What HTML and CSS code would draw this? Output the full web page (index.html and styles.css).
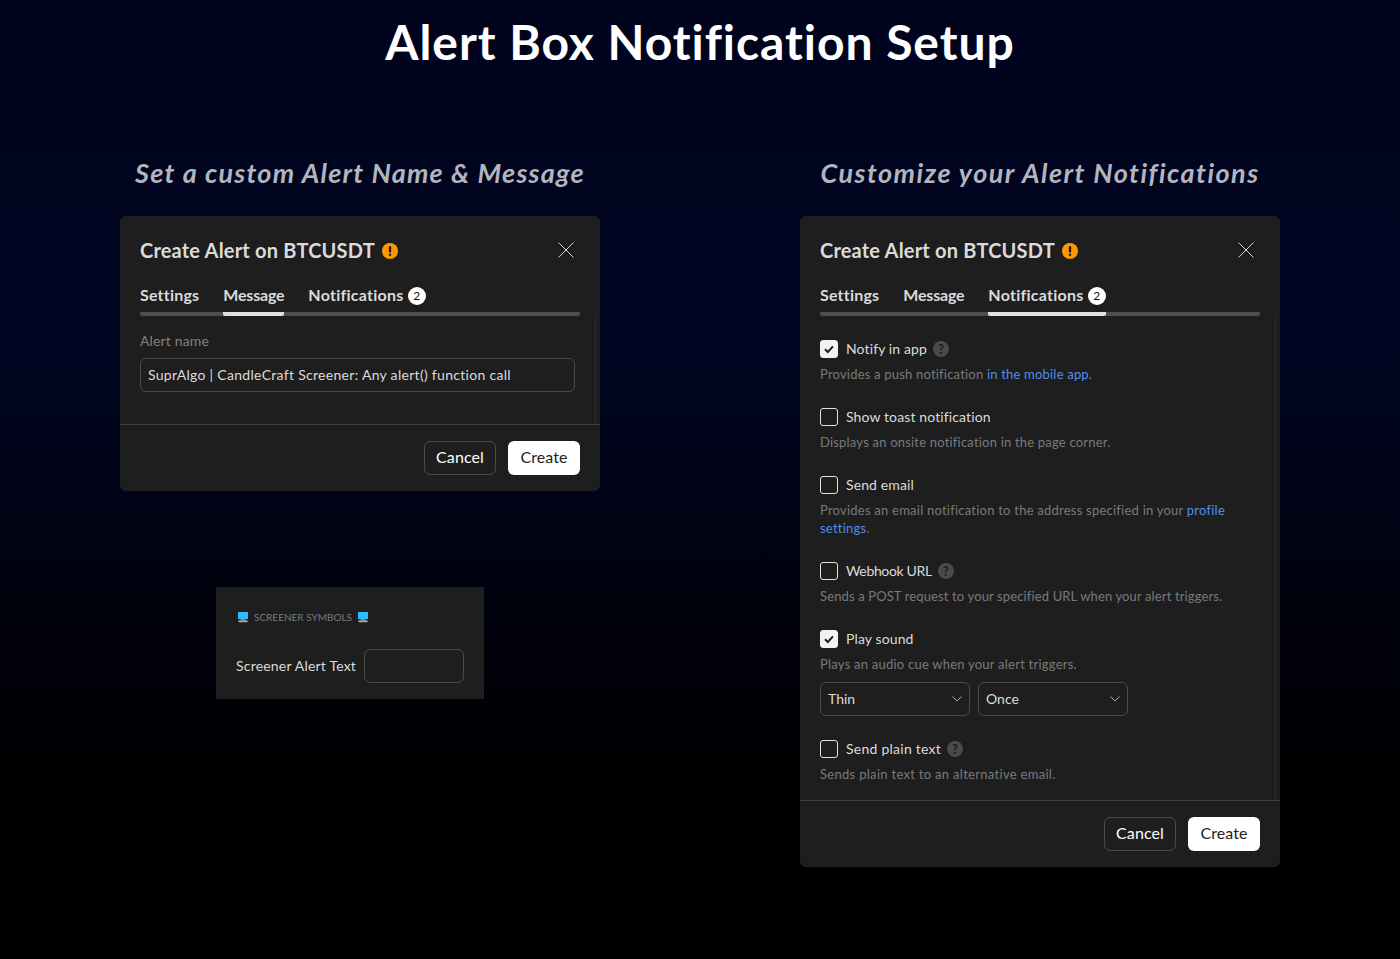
FILE: index.html
```html
<!DOCTYPE html>
<html lang="en">
<head>
<meta charset="utf-8">
<title>Alert Box Notification Setup</title>
<link rel="stylesheet" href="styles.css">
</head>
<body>
<h1 class="page-title">Alert Box Notification Setup</h1>
<main class="columns">
  <section class="column">
    <h2 class="subtitle subtitle-a">Set a custom Alert Name &amp; Message</h2>
    <div class="dialog">
      <header class="dialog-head">
        <span class="dialog-title">Create Alert on BTCUSDT</span>
        <svg class="warn" viewBox="0 0 16 16"><circle cx="8" cy="8" r="8" fill="#ff9800"/><rect x="6.8" y="3" width="2.4" height="6.4" rx="1" fill="#1e1e1e"/><circle cx="8" cy="11.8" r="1.3" fill="#1e1e1e"/></svg>
        <svg class="close" viewBox="0 0 16 16"><path d="M.5.5l15 15M15.5.5l-15 15" stroke="#d1d1d1" fill="none"/></svg>
      </header>
      <nav class="tabs">
        <span class="tab">Settings</span>
        <span class="tab tab-message tab-active">Message</span>
        <span class="tab tab-notify">Notifications <span class="badge">2</span></span>
      </nav>
      <div class="dialog-body body-message">
        <label class="field-label">Alert name</label>
        <div class="text-input">SuprAlgo | CandleCraft Screener: Any alert() function call</div>
      </div>
      <footer class="dialog-foot">
        <button class="btn btn-ghost">Cancel</button>
        <button class="btn btn-white">Create</button>
      </footer>
    </div>
    <div class="screener">
      <div class="screener-title">
        <svg class="pc" viewBox="0 0 12 12"><rect x="1" y="1" width="10" height="7" fill="#2ebcff"/><rect x="3.5" y="8" width="5" height="1" fill="#8a8a8a"/><rect x="1.5" y="9.3" width="9" height="2" fill="#a8a8a8"/></svg>
        <span>SCREENER SYMBOLS</span>
        <svg class="pc" viewBox="0 0 12 12"><rect x="1" y="1" width="10" height="7" fill="#2ebcff"/><rect x="3.5" y="8" width="5" height="1" fill="#8a8a8a"/><rect x="1.5" y="9.3" width="9" height="2" fill="#a8a8a8"/></svg>
      </div>
      <div class="screener-row">
        <span class="screener-label">Screener Alert Text</span>
        <div class="screener-input"></div>
      </div>
    </div>
  </section>
  <section class="column">
    <h2 class="subtitle subtitle-b">Customize your Alert Notifications</h2>
    <div class="dialog">
      <header class="dialog-head">
        <span class="dialog-title">Create Alert on BTCUSDT</span>
        <svg class="warn" viewBox="0 0 16 16"><circle cx="8" cy="8" r="8" fill="#ff9800"/><rect x="6.8" y="3" width="2.4" height="6.4" rx="1" fill="#1e1e1e"/><circle cx="8" cy="11.8" r="1.3" fill="#1e1e1e"/></svg>
        <svg class="close" viewBox="0 0 16 16"><path d="M.5.5l15 15M15.5.5l-15 15" stroke="#d1d1d1" fill="none"/></svg>
      </header>
      <nav class="tabs">
        <span class="tab">Settings</span>
        <span class="tab tab-message">Message</span>
        <span class="tab tab-notify tab-active">Notifications <span class="badge">2</span></span>
      </nav>
      <div class="dialog-body body-notify">
        <div class="option">
          <div class="check-row"><span class="check check-on"><svg viewBox="0 0 18 18"><path d="M5 9.2l2.8 2.8L13 6.4" stroke="#1e1e1e" stroke-width="2" fill="none"/></svg></span><span class="check-label">Notify in app</span><span class="help">?</span></div>
          <p class="desc">Provides a push notification <a class="link">in the mobile app.</a></p>
        </div>
        <div class="option">
          <div class="check-row"><span class="check"></span><span class="check-label">Show toast notification</span></div>
          <p class="desc">Displays an onsite notification in the page corner.</p>
        </div>
        <div class="option option-tall">
          <div class="check-row"><span class="check"></span><span class="check-label">Send email</span></div>
          <p class="desc desc-wide">Provides an email notification to the address specified in your <a class="link">profile settings</a>.</p>
        </div>
        <div class="option">
          <div class="check-row"><span class="check"></span><span class="check-label label-tight">Webhook URL</span><span class="help">?</span></div>
          <p class="desc desc-narrow">Sends a POST request to your specified URL when your alert triggers.</p>
        </div>
        <div class="option option-sound">
          <div class="check-row"><span class="check check-on"><svg viewBox="0 0 18 18"><path d="M5 9.2l2.8 2.8L13 6.4" stroke="#1e1e1e" stroke-width="2" fill="none"/></svg></span><span class="check-label">Play sound</span></div>
          <p class="desc desc-wide">Plays an audio cue when your alert triggers.</p>
          <div class="selects">
            <div class="select"><span class="select-text">Thin</span><svg class="chev" viewBox="0 0 10 6"><path d="M.5.5L5 5 9.5.5" stroke="#b0b0b0" fill="none"/></svg></div>
            <div class="select"><span class="select-text">Once</span><svg class="chev" viewBox="0 0 10 6"><path d="M.5.5L5 5 9.5.5" stroke="#b0b0b0" fill="none"/></svg></div>
          </div>
        </div>
        <div class="option option-last">
          <div class="check-row"><span class="check"></span><span class="check-label label-loose">Send plain text</span><span class="help">?</span></div>
          <p class="desc desc-widest">Sends plain text to an alternative email.</p>
        </div>
      </div>
      <footer class="dialog-foot">
        <button class="btn btn-ghost">Cancel</button>
        <button class="btn btn-white">Create</button>
      </footer>
    </div>
  </section>
</main>
</body>
</html>
```
FILE: styles.css
```css
* { box-sizing: border-box; }
html, body { margin: 0; height: 100%; }
body {
  min-height: 959px;
  overflow: hidden;
  font-family: "Lato", "Noto Sans", sans-serif;
  font-variant-ligatures: none;
  color: #dbdbdb;
  background: linear-gradient(to bottom, #00031c 0, #000522 330px, #000 800px);
}
.page-title {
  margin: 0;
  padding-top: 12px;
  height: 148px;
  text-align: center;
  color: #fff;
  font-size: 48px;
  line-height: 60px;
  font-weight: 700;
  letter-spacing: 0.95px;
}
.columns { display: flex; justify-content: space-between; padding: 0 120px; }
.column { width: 480px; display: flex; flex-direction: column; }
.subtitle {
  margin: 0;
  height: 68px;
  padding-top: 7px;
  text-align: center;
  font-size: 27px;
  line-height: 36px;
  font-style: italic;
  font-weight: 700;
  color: #b2b5be;
}
.subtitle-a { letter-spacing: 1.22px; }
.subtitle-b { letter-spacing: 1.47px; }
.dialog { background: #1e1e1e; border-radius: 6px; overflow: hidden; }
.dialog-head { display: flex; align-items: center; height: 70px; padding: 0 26px 0 20px; }
.dialog-title { margin-top: -2px; font-size: 20px; font-weight: 700; color: #dbdbdb; letter-spacing: 0.19px; }
.warn { width: 16px; height: 16px; margin-left: 7px; }
.close { width: 16px; height: 16px; margin-left: auto; margin-top: -2px; }
.tabs { display: flex; gap: 24px; margin: 0 20px; height: 30px; border-bottom: 4px solid #4f4f4f; border-radius: 2px; }
.tab { font-size: 16px; font-weight: 700; color: #dbdbdb; height: 30px; line-height: 20px; margin-top: -1px; letter-spacing: 0.2px; }
.tab-message { letter-spacing: -0.2px; }
.tab-notify { letter-spacing: 0.25px; }
.tab-active { height: 31px; border-bottom: 4px solid #e0e0e0; border-radius: 2px; }
.badge { display: inline-block; width: 18px; height: 18px; border-radius: 50%; background: #fff; color: #131313; font-size: 12px; line-height: 18px; text-align: center; font-weight: 400; letter-spacing: 0; vertical-align: 1px; }
.dialog-body { margin-right: 4px; border-right: 1px solid #2c2c2c; padding: 0 0 0 20px; }
.body-message { height: 108px; padding-top: 16px; }
.field-label { display: block; font-size: 14px; line-height: 18px; color: #808080; letter-spacing: 0.15px; }
.text-input { width: 435px; height: 34px; margin-top: 8px; padding: 0 7px; border: 1px solid #4a4a4a; border-radius: 6px; font-size: 14px; line-height: 32px; color: #dbdbdb; letter-spacing: 0.3px; }
.body-notify { height: 484px; padding-top: 24px; }
.option { height: 68px; }
.option-tall { height: 86px; }
.option-sound { height: 110px; }
.option-last { height: 60px; }
.check-row { display: flex; align-items: center; height: 18px; font-size: 14px; color: #dbdbdb; }
.check-label { margin-top: -2px; letter-spacing: 0.12px; }
.label-tight { letter-spacing: -0.35px; }
.label-loose { letter-spacing: 0.25px; }
.check { flex: none; width: 18px; height: 18px; margin-right: 8px; border: 1px solid #e0e0e0; border-radius: 3px; }
.check-on { background: #f2f2f2; border-color: #f2f2f2; }
.check-on svg { display: block; width: 18px; height: 18px; margin: -1px; }
.help { width: 16px; height: 16px; margin-left: 6px; border-radius: 50%; background: #4a4a4a; color: #1e1e1e; font-size: 13px; line-height: 16px; font-weight: 900; text-align: center; }
.desc { margin: 7px 0 0; width: 425px; font-size: 13px; line-height: 18px; color: #7a7a7a; letter-spacing: 0.2px; }
.desc-wide { letter-spacing: 0.23px; }
.desc-narrow { letter-spacing: 0.13px; }
.desc-widest { letter-spacing: 0.3px; }
.link { color: #4d8fea; }
.selects { display: flex; gap: 8px; margin-top: 9px; }
.select { display: flex; align-items: center; justify-content: space-between; width: 150px; height: 34px; padding: 0 7px; border: 1px solid #4a4a4a; border-radius: 6px; font-size: 14px; color: #dbdbdb; }
.select-text { margin-top: -2px; }
.chev { width: 10px; height: 6px; }
.dialog-foot { display: flex; justify-content: flex-end; gap: 12px; height: 67px; padding: 16px 20px 0; border-top: 1px solid #404040; }
.btn { width: 72px; height: 34px; border-radius: 6px; font-family: inherit; font-size: 16px; padding: 0 0 3px; letter-spacing: 0.1px; }
.btn-ghost { background: transparent; border: 1px solid #4a4a4a; color: #fff; }
.btn-white { background: #fff; border: 0; color: #222; }
.screener { width: 268px; height: 112px; margin: 96px 0 0 96px; padding: 21px 20px 0 21px; background: #1e1e1e; }
.screener-title { display: flex; align-items: center; gap: 5px; height: 18px; font-size: 10px; color: #787b7f; }
.pc { width: 12px; height: 12px; }
.screener-row { display: flex; align-items: center; justify-content: space-between; margin: 23px 0 0 -1px; font-size: 14px; color: #dbdbdb; letter-spacing: 0.2px; }
.screener-label { margin-top: -2px; }
.screener-input { width: 100px; height: 34px; border: 1px solid #4a4a4a; border-radius: 6px; }
```
